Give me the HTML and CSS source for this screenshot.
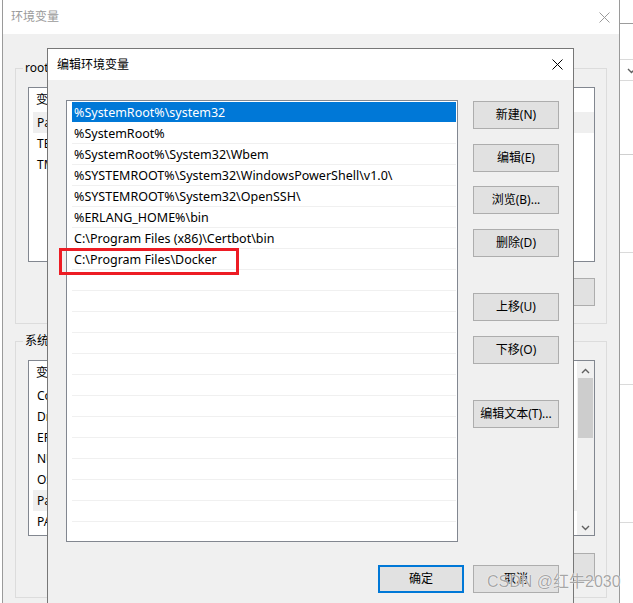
FILE: index.html
```html
<!DOCTYPE html>
<html lang="zh-CN">
<head>
<meta charset="utf-8">
<title>编辑环境变量</title>
<link rel="stylesheet" href="styles.css">
</head>
<body>
<div class="desk">

  <!-- background window: 环境变量 -->
  <div class="win bgwin">
    <div class="titlebar">
      <span class="title">环境变量</span>
      <svg class="xbtn" width="11" height="11" viewBox="0 0 11 11"><path d="M0.5 0.5 L10.5 10.5 M10.5 0.5 L0.5 10.5" stroke="#9a9a9a" stroke-width="1"/></svg>
    </div>
    <div class="wbody">
      <div class="group g1">
        <span class="legend">root 的用户变量(U)</span>
        <div class="lv lv1">
          <div class="lvh">变量</div>
          <div class="lvr sel">Path</div>
          <div class="lvr">TEMP</div>
          <div class="lvr">TMP</div>
        </div>
        <div class="gbtns">
          <span class="btn">新建(N)...</span>
          <span class="btn">编辑(E)...</span>
          <span class="btn">删除(D)</span>
        </div>
      </div>
      <div class="group g2">
        <span class="legend">系统变量(S)</span>
        <div class="lv lv2">
          <div class="lvcol">
            <div class="lvh">变量</div>
            <div class="lvr">ComSpec</div>
            <div class="lvr">DriverData</div>
            <div class="lvr">ERLANG_HOME</div>
            <div class="lvr">NUMBER_OF_PROCESSORS</div>
            <div class="lvr">OS</div>
            <div class="lvr sel">Path</div>
            <div class="lvr">PATHEXT</div>
          </div>
          <div class="vscroll">
            <svg class="arr" width="9" height="6" viewBox="0 0 9 6"><path d="M1 5 L4.5 1.5 L8 5" fill="none" stroke="#606060" stroke-width="1.4"/></svg>
            <div class="thumb"></div>
            <div class="track"></div>
            <svg class="arr" width="9" height="6" viewBox="0 0 9 6"><path d="M1 1 L4.5 4.5 L8 1" fill="none" stroke="#606060" stroke-width="1.4"/></svg>
          </div>
        </div>
        <div class="gbtns">
          <span class="btn">新建(W)...</span>
          <span class="btn">编辑(I)...</span>
          <span class="btn">删除(L)</span>
        </div>
      </div>
    </div>
  </div>

  <!-- window at the far right -->
  <div class="sidewin">
    <div class="sw r1"></div>
    <div class="sw r2"></div>
    <div class="sw r3"><svg width="9" height="6" viewBox="0 0 9 6"><path d="M1 1 L4.5 4.5 L8 1" fill="none" stroke="#606060" stroke-width="1.4"/></svg></div>
    <div class="sw r4"></div>
    <div class="sw r5"></div>
    <div class="sw r6"></div>
    <div class="sw r7"></div>
  </div>

  <!-- dialog: 编辑环境变量 -->
  <div class="win dlg">
    <div class="titlebar">
      <span class="title">编辑环境变量</span>
      <svg class="xbtn" width="11" height="11" viewBox="0 0 11 11"><path d="M0.5 0.5 L10.5 10.5 M10.5 0.5 L0.5 10.5" stroke="#000" stroke-width="1"/></svg>
    </div>
    <div class="dbody">
      <div class="main">
        <div class="plist">
          <div class="prow sel">%SystemRoot%\system32</div>
          <div class="prow">%SystemRoot%</div>
          <div class="prow">%SystemRoot%\System32\Wbem</div>
          <div class="prow">%SYSTEMROOT%\System32\WindowsPowerShell\v1.0\</div>
          <div class="prow">%SYSTEMROOT%\System32\OpenSSH\</div>
          <div class="prow">%ERLANG_HOME%\bin</div>
          <div class="prow">C:\Program Files (x86)\Certbot\bin</div>
          <div class="prow">C:\Program Files\Docker</div>
          <div class="prow"></div><div class="prow"></div><div class="prow"></div>
          <div class="prow"></div><div class="prow"></div><div class="prow"></div>
          <div class="prow"></div><div class="prow"></div><div class="prow"></div>
          <div class="prow"></div><div class="prow"></div><div class="prow"></div>
          <div class="prow"></div>
        </div>
        <div class="side">
          <div class="bgroup">
            <span class="btn">新建(N)</span>
            <span class="btn">编辑(E)</span>
            <span class="btn">浏览(B)...</span>
            <span class="btn">删除(D)</span>
          </div>
          <div class="bgroup">
            <span class="btn">上移(U)</span>
            <span class="btn">下移(O)</span>
          </div>
          <div class="bgroup">
            <span class="btn">编辑文本(T)...</span>
          </div>
        </div>
      </div>
      <div class="foot">
        <span class="btn def">确定</span>
        <span class="btn">取消</span>
      </div>
    </div>
    <div class="mark"></div>
  </div>

  <div class="wm">CSDN @红牛2030</div>
</div>
</body>
</html>
```

FILE: styles.css
```css
* { box-sizing: border-box; }
html, body { margin: 0; padding: 0; background: #fff; }
body {
  font-family: "Microsoft YaHei UI", "Noto Sans", "Noto Sans CJK SC", sans-serif;
  font-size: 12px;
  color: #000;
}
.desk {
  position: relative;
  width: 633px;
  height: 603px;
  overflow: hidden;
}

/* generic window */
.win { position: absolute; background: #f0f0f0; }
.titlebar {
  display: flex;
  align-items: center;
  justify-content: space-between;
  background: #fff;
}
.xbtn { display: block; }

/* background window */
.bgwin {
  left: 2px;
  top: 0;
  width: 618px;
  height: 700px;
  border: 1px solid #9a9a9a;
  border-top: none;
}
.bgwin .titlebar { height: 34px; padding: 0 9px 0 8px; }
.bgwin .title { color: #9a9a9a; line-height: 16px; }
.wbody { padding: 34px 12px 0 12px; }
.group {
  position: relative;
  border: 1px solid #dcdcdc;
  padding: 18px 11px 0 12px;
}
.g1 { height: 256px; }
.g2 { height: 257px; margin-top: 17px; }
.legend {
  position: absolute;
  left: 7px;
  top: -9px;
  padding: 0 2px;
  background: #f0f0f0;
  line-height: 16px;
  white-space: nowrap;
}
.lv {
  background: #fff;
  border: 1px solid #828790;
  height: 175px;
}
.lv2 { height: 176px; display: flex; }
.lvcol { flex: 1; }
.lvh { height: 24px; line-height: 24px; padding-left: 7px; }
.lvr { height: 21px; line-height: 21px; margin-left: 4px; padding-left: 4px; }
.lvr.sel { background: #efefef; }
.vscroll {
  width: 17px;
  background: #f0f0f0;
  display: flex;
  flex-direction: column;
  align-items: center;
}
.vscroll .arr { margin: 7px 0 4px; }
.thumb { width: 15px; height: 60px; background: #cdcdcd; }
.track { flex: 1; }
.gbtns {
  display: flex;
  justify-content: flex-end;
  gap: 8px;
  margin-top: 16px;
}
.g2 .gbtns { margin-top: 17px; }

.btn {
  display: flex;
  align-items: center;
  justify-content: center;
  width: 86px;
  height: 28px;
  background: #e1e1e1;
  border: 1px solid #adadad;
  white-space: nowrap;
  line-height: 16px;
}
.btn.def { border: 2px solid #0078d7; }

/* side window */
.sidewin {
  position: absolute;
  left: 620px;
  top: 0;
  width: 13px;
  height: 603px;
  background: #fff;
  display: flex;
  flex-direction: column;
}
.sw { border-bottom: 1px solid #dadada; }
.r1 { height: 24px; border-bottom-color: #9c9c9c; }
.r2 { height: 36px; }
.r3 { height: 21px; padding: 8px 0 0 7px; }
.r3 svg { display: block; }
.r4 { height: 74px; border-bottom-color: #cfcfcf; }
.r5 { height: 98px; }
.r6 { height: 132px; }
.r7 { height: 138px; }

/* dialog */
.dlg {
  left: 47px;
  top: 48px;
  width: 527px;
  height: 620px;
  border: 1px solid #777;
}
.dlg .titlebar { height: 31px; padding: 0 10px 0 9px; }
.dlg .title { line-height: 16px; }
.dbody { padding: 20px 14px 0 18px; }
.main { display: flex; gap: 15px; }
.plist {
  width: 392px;
  height: 442px;
  background: #fff;
  border: 1px solid #828790;
  padding: 1px 1px 0 5px;
  overflow: hidden;
}
.prow {
  height: 21px;
  font-size: 12.5px;
  line-height: 20px;
  padding: 1px 0 0 2px;
  border-bottom: 1px solid #f0f0f0;
  white-space: nowrap;
}
.prow.sel { background: #0078d7; color: #fff; border-bottom-color: #fff; }
.side {
  display: flex;
  flex-direction: column;
  gap: 36px;
  padding-top: 1px;
}
.bgroup { display: flex; flex-direction: column; gap: 14.67px; }
.foot {
  display: flex;
  justify-content: flex-end;
  gap: 9px;
  margin-top: 23px;
}
.mark {
  position: absolute;
  left: 11px;
  top: 199px;
  width: 180px;
  height: 27px;
  border: 3px solid #ed1c24;
}

/* watermark */
.wm {
  position: absolute;
  left: 487px;
  top: 572px;
  font-family: "Liberation Sans", "Noto Sans CJK SC", sans-serif;
  font-size: 16px;
  line-height: 20px;
  color: rgba(150, 150, 150, 0.85);
  text-shadow: 0 0 1px #fff, 0 0 1px #fff;
  white-space: nowrap;
}
```
